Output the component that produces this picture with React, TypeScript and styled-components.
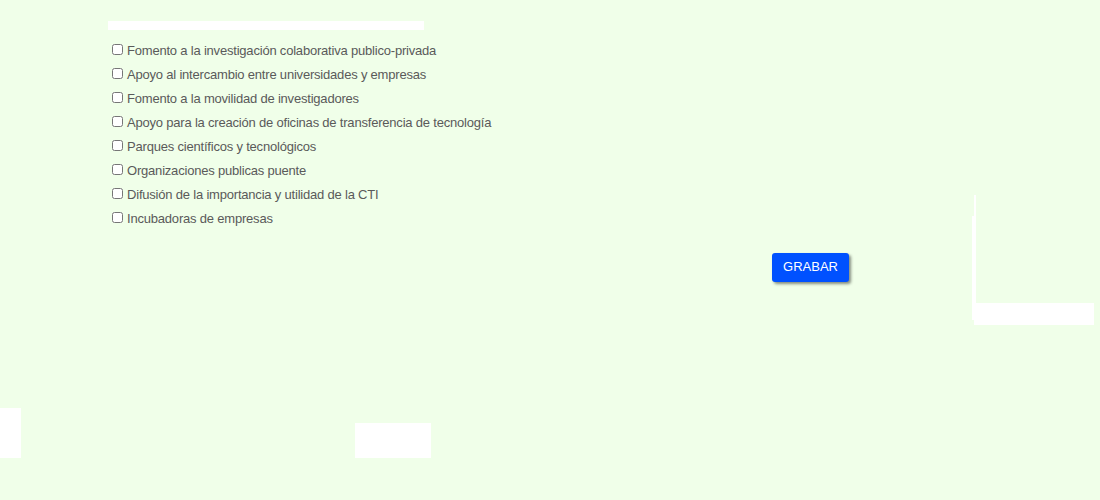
import React from "react";
import styled, { createGlobalStyle } from "styled-components";

const Global = createGlobalStyle`
  html, body { margin: 0; padding: 0; background: #f0ffe9; }
  body { font-family: "Liberation Sans", Arial, sans-serif; }
`;

const Page = styled.div`
  width: 1100px;
  height: 500px;
  display: grid;
  grid-template-columns: 972px 1fr;
  grid-template-rows: auto auto;
  align-content: start;
  background: #f0ffe9;
  overflow: hidden;
`;

const Main = styled.div`
  padding: 21px 0 0 108px;
  display: flex;
  flex-direction: column;
  align-items: flex-start;
  width: 741px;
`;

const TopBar = styled.div`
  width: 316px;
  height: 9px;
  background: #ffffff;
  margin-bottom: 8px;
`;

const List = styled.div`
  display: flex;
  flex-direction: column;
`;

const Row = styled.label`
  display: flex;
  align-items: center;
  height: 24px;
  font-size: 13px;
  letter-spacing: -0.2px;
  color: #5a5a5a;
`;

const Box = styled.input`
  width: 11px;
  height: 11px;
  margin: 0 4px 1px 4px;
`;

const Actions = styled.div`
  align-self: stretch;
  display: flex;
  justify-content: flex-end;
  margin-top: 23px;
`;

const Button = styled.button`
  width: 77px;
  height: 29px;
  background: #0051ff;
  color: #ffffff;
  border: none;
  border-radius: 3px;
  font-family: "Liberation Sans", Arial, sans-serif;
  font-size: 13px;
  box-shadow: 2px 2px 3px rgba(0, 0, 0, 0.45);
  cursor: pointer;
  padding: 0 0 2px;
`;

const Side = styled.div`
  margin-top: 195px;
  display: flex;
  flex-direction: column;
`;

const Strip = styled.div<{ $w: number; $h: number; $ml?: number }>`
  width: ${(p) => p.$w}px;
  height: ${(p) => p.$h}px;
  margin-left: ${(p) => p.$ml ?? 0}px;
  background: #ffffff;
  flex: none;
`;

const SideBody = styled.div`
  display: flex;
  align-items: flex-start;
`;

const SideCol = styled.div`
  display: flex;
  flex-direction: column;
`;

const Bottom = styled.div`
  grid-column: 1 / span 2;
  margin-top: 83px;
  display: flex;
  align-items: flex-end;
  gap: 334px;
`;

const items = [
  "Fomento a la investigación colaborativa publico-privada",
  "Apoyo al intercambio entre universidades y empresas",
  "Fomento a la movilidad de investigadores",
  "Apoyo para la creación de oficinas de transferencia de tecnología",
  "Parques científicos y tecnológicos",
  "Organizaciones publicas puente",
  "Difusión de la importancia y utilidad de la CTI",
  "Incubadoras de empresas",
];

export default function App() {
  return (
    <>
      <Global />
      <Page>
        <Main>
          <TopBar />
          <List>
            {items.map((t) => (
              <Row key={t}>
                <Box type="checkbox" />
                {t}
              </Row>
            ))}
          </List>
          <Actions>
            <Button type="button">GRABAR</Button>
          </Actions>
        </Main>
        <Side>
          <Strip $w={2} $h={21} $ml={2} />
          <SideBody>
            <Strip $w={2} $h={104} />
            <SideCol>
              <Strip $w={2} $h={87} />
              <Strip $w={120} $h={22} />
            </SideCol>
          </SideBody>
        </Side>
        <Bottom>
          <Strip $w={21} $h={50} />
          <Strip $w={76} $h={35} />
        </Bottom>
      </Page>
    </>
  );
}
